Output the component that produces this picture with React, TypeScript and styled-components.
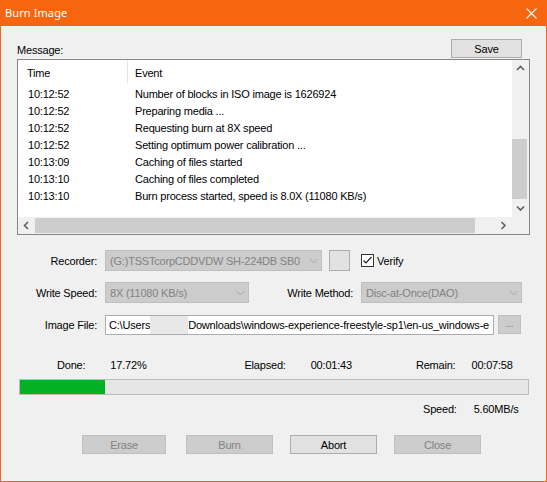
import React from "react";
import styled, { createGlobalStyle, css } from "styled-components";

const Global = createGlobalStyle`
  html, body { margin: 0; padding: 0; background: #f0f0f0; }
  body { font-family: "Liberation Sans", Arial, sans-serif; font-size: 11px; letter-spacing: -0.2px; color: #000; }
  * { box-sizing: border-box; }
`;

const ORANGE = "#f7660f";

const Window = styled.div`
  width: 547px;
  height: 482px;
  display: flex;
  flex-direction: column;
  background: #f0f0f0;
  border: 1px solid ${ORANGE};
  border-top: none;
  overflow: hidden;
`;

const TitleBar = styled.div`
  height: 26px;
  margin: 0 -1px;
  background: ${ORANGE};
  display: flex;
  align-items: center;
  justify-content: space-between;
  padding: 0 0 1px 5px;
  flex-shrink: 0;
`;

const Title = styled.span`
  font-family: "Noto Sans", "Open Sans", sans-serif;
  font-size: 11px;
  letter-spacing: 0.1px;
  color: #fff;
`;

const CloseBox = styled.div`
  width: 32px;
  height: 26px;
  display: flex;
  align-items: center;
  justify-content: center;
  margin-top: 1px;
`;

const Content = styled.div`
  flex: 1;
  display: flex;
  flex-direction: column;
  padding: 11px 16px 0 16px;
`;

const MessageRow = styled.div`
  display: flex;
  justify-content: space-between;
  align-items: flex-end;
  height: 21px;
  padding-right: 8px;
`;

const MessageLabel = styled.span`
  line-height: 13px;
  padding-bottom: 1px;
`;

const Button = styled.div<{ $disabled?: boolean; $w: number }>`
  width: ${(p) => p.$w}px;
  height: 19px;
  display: flex;
  align-items: center;
  justify-content: center;
  background: #e1e1e1;
  border: 1px solid #adadad;
  color: #000;
  ${(p) =>
    p.$disabled &&
    css`
      background: #cccccc;
      border-color: #bfbfbf;
      color: #838383;
    `}
`;

const ListView = styled.div`
  margin-top: 1px;
  width: 513px;
  height: 176px;
  border: 1px solid #828790;
  background: #fff;
  display: grid;
  grid-template-columns: 1fr 17px;
  grid-template-rows: 1fr 17px;
`;

const ListBody = styled.div`
  overflow: hidden;
  display: flex;
  flex-direction: column;
`;

const HeaderRow = styled.div`
  display: grid;
  grid-template-columns: 110px 1fr;
  height: 25px;
`;

const HeaderCell = styled.div<{ $first?: boolean }>`
  display: flex;
  align-items: center;
  padding-left: ${(p) => (p.$first ? 9 : 7)}px;
  padding-top: 2px;
  border-right: ${(p) => (p.$first ? "1px solid #e5e5e5" : "none")};
  height: 23px;
`;

const Row = styled.div`
  display: grid;
  grid-template-columns: 111px 1fr;
  height: 17px;
  align-items: center;
  white-space: nowrap;
`;

const TimeCell = styled.span`
  padding-left: 10px;
`;

const EventCell = styled.span`
  padding-left: 6px;
`;

const VScroll = styled.div`
  background: #f0f0f0;
  display: flex;
  flex-direction: column;
`;

const HScroll = styled.div`
  background: #f0f0f0;
  display: flex;
`;

const Corner = styled.div`
  background: #f0f0f0;
`;

const ArrowBtn = styled.div`
  width: 17px;
  height: 17px;
  display: flex;
  align-items: center;
  justify-content: center;
  flex-shrink: 0;
`;

const VTrack = styled.div`
  flex: 1;
  display: flex;
  flex-direction: column;
  justify-content: flex-end;
  padding-bottom: 1px;
`;

const VThumb = styled.div`
  height: 60px;
  margin: 0 2px 0 0;
  background: #cdcdcd;
`;

const HTrack = styled.div`
  flex: 1;
  display: flex;
  padding: 1px 0;
`;

const HThumb = styled.div`
  width: 440px;
  background: #cdcdcd;
`;

const Form = styled.div`
  margin-top: 15px;
  display: flex;
  flex-direction: column;
  gap: 11px;
`;

const FormRow = styled.div`
  display: flex;
  align-items: center;
  height: 21px;
`;

const Label = styled.span<{ $w: number }>`
  width: ${(p) => p.$w}px;
  text-align: right;
  flex-shrink: 0;
  margin-right: 8px;
`;

const Combo = styled.div<{ $w: number }>`
  width: ${(p) => p.$w}px;
  height: 21px;
  flex-shrink: 0;
  background: #cccccc;
  border: 1px solid #bfbfbf;
  color: #838383;
  display: flex;
  align-items: center;
  justify-content: space-between;
  padding: 0 3px 0 4px;
  white-space: nowrap;
  overflow: hidden;
`;

const ComboText = styled.span`
  overflow: hidden;
`;

const SmallButton = styled.div`
  width: 21px;
  height: 21px;
  margin-left: 7px;
  background: #e1e1e1;
  border: 1px solid #adadad;
  flex-shrink: 0;
`;

const CheckLabel = styled.label`
  display: flex;
  align-items: center;
  gap: 3px;
  margin-left: 11px;
`;

const CheckBox = styled.div`
  width: 13px;
  height: 13px;
  border: 1px solid #333;
  background: #fff;
  display: flex;
  align-items: center;
  justify-content: center;
`;

const PathInput = styled.div`
  width: 389px;
  height: 20px;
  flex-shrink: 0;
  background: #fff;
  border: 1px solid #abadb3;
  display: flex;
  align-items: stretch;
  padding-left: 3px;
  white-space: nowrap;
  overflow: hidden;
`;

const PathText = styled.span`
  display: flex;
  align-items: center;
  flex-shrink: 0;
`;

const PathRest = styled.span`
  flex: 1;
  min-width: 0;
  overflow: hidden;
  line-height: 18px;
`;

const Redacted = styled.span`
  width: 38px;
  align-self: stretch;
  background: #e8e8e8;
  flex-shrink: 0;
`;

const BrowseButton = styled.div`
  width: 23px;
  height: 19px;
  margin-left: 4px;
  background: #cccccc;
  border: 1px solid #bfbfbf;
  color: #838383;
  display: flex;
  align-items: center;
  justify-content: center;
  font-size: 10px;
  padding-bottom: 3px;
`;

const StatsRow = styled.div`
  margin-top: 23px;
  display: flex;
  height: 13px;
  align-items: center;
  white-space: nowrap;
`;

const Stat = styled.span<{ $x: number }>`
  margin-left: ${(p) => p.$x}px;
`;

const Progress = styled.div`
  margin: 8px 0 0 2px;
  width: 510px;
  height: 16px;
  background: #e6e6e6;
  border: 1px solid #bcbcbc;
  display: flex;
`;

const ProgressFill = styled.div`
  background: #06b025;
`;

const SpeedRow = styled.div`
  margin-top: 7px;
  display: flex;
  height: 13px;
  align-items: center;
`;

const ButtonRow = styled.div`
  margin-top: 20px;
  display: flex;
  padding-left: 65px;
`;

const Spacer = styled.div<{ $w: number }>`
  width: ${(p) => p.$w}px;
  flex-shrink: 0;
`;

const Chevron = ({ dir }: { dir: "up" | "down" | "left" | "right" }) => {
  const d =
    dir === "up"
      ? "M1 5 L4.5 1.5 L8 5"
      : dir === "down"
      ? "M1 1.5 L4.5 5 L8 1.5"
      : dir === "left"
      ? "M5 1 L1.5 4.5 L5 8"
      : "M1.5 1 L5 4.5 L1.5 8";
  const w = dir === "up" || dir === "down" ? 9 : 7;
  const h = dir === "up" || dir === "down" ? 7 : 9;
  return (
    <svg width={w} height={h} viewBox={`0 0 ${w} ${h}`}>
      <path d={d} fill="none" stroke="#606060" strokeWidth="1.6" />
    </svg>
  );
};

const ComboArrow = () => (
  <svg width="9" height="6" viewBox="0 0 9 6">
    <path d="M0.5 1 L4.5 5 L8.5 1" fill="none" stroke="#a8a8a8" strokeWidth="1" />
  </svg>
);

const rows: [string, string][] = [
  ["10:12:52", "Number of blocks in ISO image is 1626924"],
  ["10:12:52", "Preparing media ..."],
  ["10:12:52", "Requesting burn at 8X speed"],
  ["10:12:52", "Setting optimum power calibration ..."],
  ["10:13:09", "Caching of files started"],
  ["10:13:10", "Caching of files completed"],
  ["10:13:10", "Burn process started, speed is 8.0X (11080 KB/s)"],
];

const barFraction = 16.8;

export default function App() {
  return (
    <>
      <Global />
      <Window>
        <TitleBar>
          <Title>Burn Image</Title>
          <CloseBox>
            <svg width="11" height="11" viewBox="0 0 11 11">
              <path d="M0.5 0.5 L10.5 10.5 M10.5 0.5 L0.5 10.5" stroke="#fff" strokeWidth="1.1" />
            </svg>
          </CloseBox>
        </TitleBar>
        <Content>
          <MessageRow>
            <MessageLabel>Message:</MessageLabel>
            <Button $w={71}>Save</Button>
          </MessageRow>
          <ListView>
            <ListBody>
              <HeaderRow>
                <HeaderCell $first>Time</HeaderCell>
                <HeaderCell>Event</HeaderCell>
              </HeaderRow>
              {rows.map(([t, e], i) => (
                <Row key={i}>
                  <TimeCell>{t}</TimeCell>
                  <EventCell>{e}</EventCell>
                </Row>
              ))}
            </ListBody>
            <VScroll>
              <ArrowBtn>
                <Chevron dir="up" />
              </ArrowBtn>
              <VTrack>
                <VThumb />
              </VTrack>
              <ArrowBtn>
                <Chevron dir="down" />
              </ArrowBtn>
            </VScroll>
            <HScroll>
              <ArrowBtn>
                <Chevron dir="left" />
              </ArrowBtn>
              <HTrack>
                <HThumb />
              </HTrack>
              <ArrowBtn>
                <Chevron dir="right" />
              </ArrowBtn>
            </HScroll>
            <Corner />
          </ListView>

          <Form>
            <FormRow>
              <Label $w={80}>Recorder:</Label>
              <Combo $w={217}>
                <ComboText>(G:)TSSTcorpCDDVDW SH-224DB SB0</ComboText>
                <ComboArrow />
              </Combo>
              <SmallButton />
              <CheckLabel>
                <CheckBox>
                  <svg width="11" height="11" viewBox="0 0 11 11">
                    <path d="M1.5 5.5 L4 8 L9.5 2" fill="none" stroke="#222" strokeWidth="1.2" />
                  </svg>
                </CheckBox>
                Verify
              </CheckLabel>
            </FormRow>
            <FormRow>
              <Label $w={80}>Write Speed:</Label>
              <Combo $w={144}>
                <ComboText>8X (11080 KB/s)</ComboText>
                <ComboArrow />
              </Combo>
              <Label $w={104}>Write Method:</Label>
              <Combo $w={161}>
                <ComboText>Disc-at-Once(DAO)</ComboText>
                <ComboArrow />
              </Combo>
            </FormRow>
            <FormRow>
              <Label $w={80}>Image File:</Label>
              <PathInput>
                <PathText>C:\Users</PathText>
                <Redacted />
                <PathRest>Downloads\windows-experience-freestyle-sp1\en-us_windows-e</PathRest>
              </PathInput>
              <BrowseButton>...</BrowseButton>
            </FormRow>
          </Form>

          <StatsRow>
            <Stat $x={40}>Done:</Stat>
            <Stat $x={25}>17.72%</Stat>
            <Stat $x={98}>Elapsed:</Stat>
            <Stat $x={25}>00:01:43</Stat>
            <Stat $x={64}>Remain:</Stat>
            <Stat $x={16}>00:07:58</Stat>
          </StatsRow>
          <Progress>
            <ProgressFill style={{ width: `${barFraction}%` }} />
          </Progress>
          <SpeedRow>
            <Stat $x={406}>Speed:</Stat>
            <Stat $x={17}>5.60MB/s</Stat>
          </SpeedRow>
          <ButtonRow>
            <Button $w={84} $disabled>Erase</Button>
            <Spacer $w={20} />
            <Button $w={87} $disabled>Burn</Button>
            <Spacer $w={17} />
            <Button $w={87}>Abort</Button>
            <Spacer $w={17} />
            <Button $w={87} $disabled>Close</Button>
          </ButtonRow>
        </Content>
      </Window>
    </>
  );
}
